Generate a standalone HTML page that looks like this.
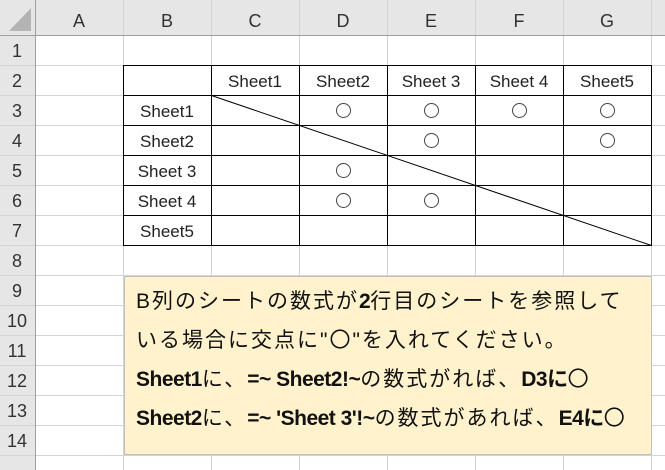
<!DOCTYPE html>
<html><head><meta charset="utf-8"><style>
body{margin:0;width:665px;height:470px;overflow:hidden;background:#fff;font-family:"Liberation Sans","Noto Sans CJK JP",sans-serif}
svg{position:absolute;left:0;top:0}
.box{position:absolute;left:124px;top:276px;width:528px;height:179px;background:#fff2cc;border:1px solid #bfbfbf;box-sizing:border-box;padding:5px 0 0 11px;font-size:21px;line-height:39px;color:#111;font-family:"Liberation Sans","Noto Sans CJK JP",sans-serif;white-space:nowrap;letter-spacing:2px}
b{font-weight:bold;letter-spacing:-0.5px}
</style></head><body>
<svg width="665" height="470" xmlns="http://www.w3.org/2000/svg" font-family="Liberation Sans, Noto Sans CJK JP, sans-serif">
<rect x="0" y="0" width="665" height="36" fill="#e6e6e6"/>
<rect x="0" y="0" width="35" height="470" fill="#e6e6e6"/>
<polygon points="31,8 31,31 9,31" fill="#b4b4b4"/>
<g stroke="#d4d4d4" stroke-width="1">
<line x1="123.5" y1="0" x2="123.5" y2="470"/><line x1="211.5" y1="0" x2="211.5" y2="470"/><line x1="299.5" y1="0" x2="299.5" y2="470"/><line x1="387.5" y1="0" x2="387.5" y2="470"/><line x1="475.5" y1="0" x2="475.5" y2="470"/><line x1="563.5" y1="0" x2="563.5" y2="470"/><line x1="651.5" y1="0" x2="651.5" y2="470"/>
<line x1="0" y1="65.5" x2="665" y2="65.5"/><line x1="0" y1="95.5" x2="665" y2="95.5"/><line x1="0" y1="125.5" x2="665" y2="125.5"/><line x1="0" y1="155.5" x2="665" y2="155.5"/><line x1="0" y1="185.5" x2="665" y2="185.5"/><line x1="0" y1="215.5" x2="665" y2="215.5"/><line x1="0" y1="245.5" x2="665" y2="245.5"/><line x1="0" y1="275.5" x2="665" y2="275.5"/><line x1="0" y1="305.5" x2="665" y2="305.5"/><line x1="0" y1="335.5" x2="665" y2="335.5"/><line x1="0" y1="365.5" x2="665" y2="365.5"/><line x1="0" y1="395.5" x2="665" y2="395.5"/><line x1="0" y1="425.5" x2="665" y2="425.5"/><line x1="0" y1="455.5" x2="665" y2="455.5"/>
</g>
<g stroke="#9e9e9e"><line x1="0" y1="35.5" x2="665" y2="35.5"/><line x1="35.5" y1="0" x2="35.5" y2="470"/></g>
<g font-size="18" fill="#333" text-anchor="middle">
<text x="79" y="27">A</text><text x="167" y="27">B</text><text x="255" y="27">C</text><text x="343" y="27">D</text><text x="431" y="27">E</text><text x="519" y="27">F</text><text x="607" y="27">G</text>
<text x="17" y="57">1</text><text x="17" y="87">2</text><text x="17" y="117">3</text><text x="17" y="147">4</text><text x="17" y="177">5</text><text x="17" y="207">6</text><text x="17" y="237">7</text><text x="17" y="267">8</text><text x="17" y="297">9</text><text x="17" y="327">10</text><text x="17" y="357">11</text><text x="17" y="387">12</text><text x="17" y="417">13</text><text x="17" y="447">14</text>
</g>
<g stroke="#000" stroke-width="1" fill="none">
<rect x="123.5" y="65.5" width="528" height="180"/>
<line x1="211.5" y1="65" x2="211.5" y2="246"/><line x1="299.5" y1="65" x2="299.5" y2="246"/><line x1="387.5" y1="65" x2="387.5" y2="246"/><line x1="475.5" y1="65" x2="475.5" y2="246"/><line x1="563.5" y1="65" x2="563.5" y2="246"/>
<line x1="123" y1="95.5" x2="652" y2="95.5"/><line x1="123" y1="125.5" x2="652" y2="125.5"/><line x1="123" y1="155.5" x2="652" y2="155.5"/><line x1="123" y1="185.5" x2="652" y2="185.5"/><line x1="123" y1="215.5" x2="652" y2="215.5"/>
<line x1="211.5" y1="95.5" x2="651.5" y2="245.5"/>
</g>
<g font-size="17" fill="#222" text-anchor="middle">
<text x="255" y="87">Sheet1</text><text x="343" y="87">Sheet2</text><text x="431" y="87">Sheet 3</text><text x="519" y="87">Sheet 4</text><text x="607" y="87">Sheet5</text>
<text x="167" y="117">Sheet1</text><text x="167" y="147">Sheet2</text><text x="167" y="177">Sheet 3</text><text x="167" y="207">Sheet 4</text><text x="167" y="237">Sheet5</text>
</g>
<g fill="none" stroke="#444" stroke-width="1">
<circle cx="343.5" cy="110.5" r="7"/><circle cx="431.5" cy="110.5" r="7"/><circle cx="519.5" cy="110.5" r="7"/><circle cx="607.5" cy="110.5" r="7"/>
<circle cx="431.5" cy="140.5" r="7"/><circle cx="607.5" cy="140.5" r="7"/>
<circle cx="343.5" cy="170.5" r="7"/><circle cx="343.5" cy="200.5" r="7"/><circle cx="431.5" cy="200.5" r="7"/>
</g>
</svg>
<div class="box">B列のシートの数式が<b>2</b>行目のシートを参照して<br>いる場合に交点に"〇"を入れてください。<br><b>Sheet1</b>に、<b>=~ Sheet2!~</b>の数式がれば、<b>D3に</b>〇<br><b>Sheet2</b>に、<b>=~ 'Sheet 3'!~</b>の数式があれば、<b>E4に</b>〇</div>
</body></html>
